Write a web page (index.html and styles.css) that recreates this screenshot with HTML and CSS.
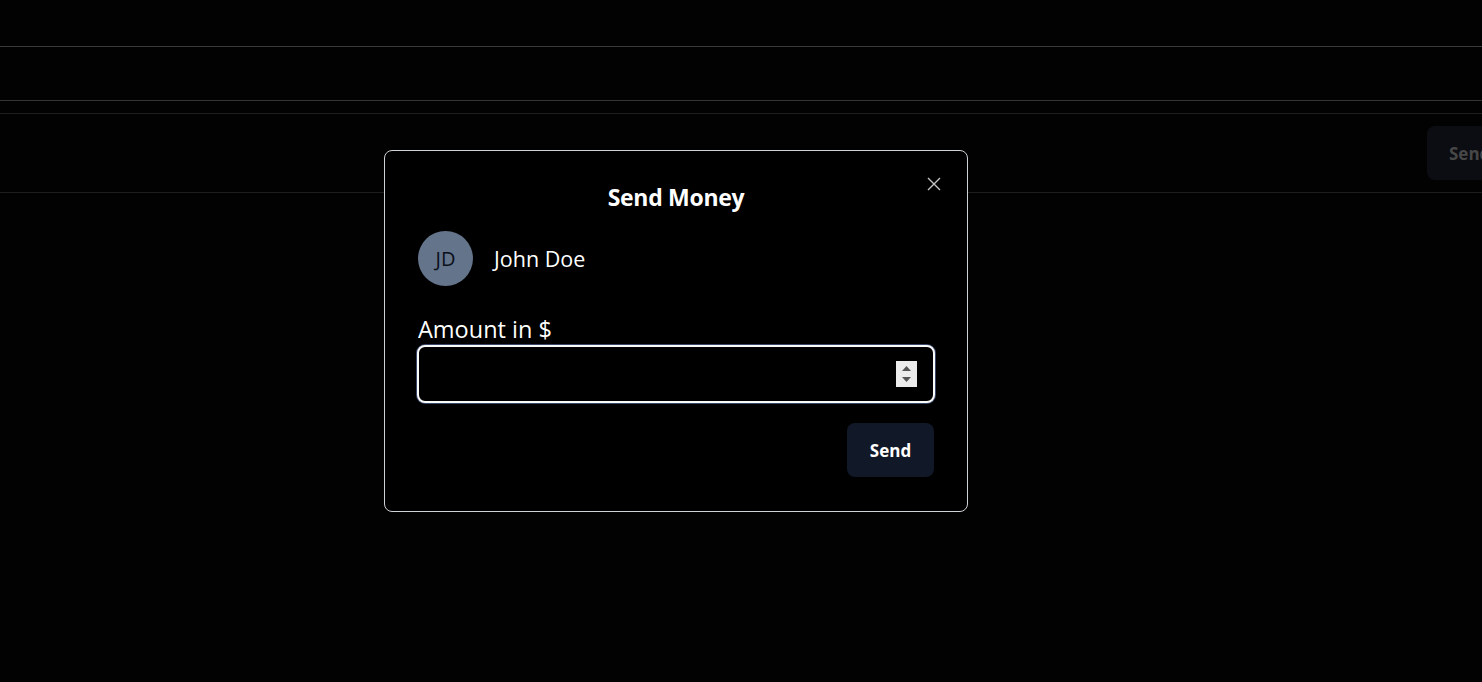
FILE: index.html
```html
<!DOCTYPE html>
<html lang="en">
<head>
<meta charset="utf-8">
<title>Send Money</title>
<link rel="stylesheet" href="styles.css">
</head>
<body>
<div class="page">
  <header class="topbar"></header>
  <div class="greeting"></div>
  <div class="users">
    <div class="user-row">
      <button class="row-send">Send</button>
    </div>
  </div>
</div>

<div class="modal">
  <div class="modal-head">
    <h2 class="modal-title">Send Money</h2>
    <button class="close" aria-label="Close">
      <svg viewBox="0 0 14 14" width="14" height="14"><path d="M1 1L13 13M13 1L1 13" stroke="#c4c4c4" stroke-width="1.4" fill="none"/></svg>
    </button>
  </div>
  <div class="recipient">
    <div class="avatar">JD</div>
    <div class="name">John Doe</div>
  </div>
  <label class="label" for="amount">Amount in $</label>
  <div class="field">
    <input id="amount" class="input" type="text">
    <span class="spinner">
      <svg viewBox="0 0 21 26" width="21" height="26"><path d="M6 10L10.5 5L15 10Z" fill="#555"/><path d="M6 16L10.5 21L15 16Z" fill="#555"/></svg>
    </span>
  </div>
  <div class="actions">
    <button class="send">Send</button>
  </div>
</div>
</body>
</html>
```
FILE: styles.css
```css
html, body {
  margin: 0;
  padding: 0;
  background: #020202;
  overflow: hidden;
  height: 100%;
}
body {
  font-family: "Open Sans", "Noto Sans", sans-serif;
  color: #fff;
}
.page {
  display: flex;
  flex-direction: column;
}
.topbar {
  height: 46px;
  border-bottom: 1px solid #3b3b3b;
}
.greeting {
  height: 53px;
  border-bottom: 1px solid #353535;
}
.users {
  padding-top: 12px;
}
.user-row {
  display: flex;
  justify-content: flex-end;
  border-top: 1px solid #1e1e1e;
  border-bottom: 1px solid #1e1e1e;
  padding: 12px 0;
}
.row-send {
  width: 87px;
  height: 54px;
  margin-right: -32px;
  border: none;
  border-radius: 8px;
  background: #0b0d13;
  color: #474747;
  font-family: inherit;
  font-weight: 700;
  font-size: 17px;
  text-align: left;
  padding: 0 0 0 22px;
}
.modal {
  position: absolute;
  left: 384px;
  top: 150px;
  width: 518px;
  padding: 30px 32px 34px;
  border: 1px solid #cfd2d6;
  border-radius: 8px;
  background: #000;
  display: flex;
  flex-direction: column;
}
.modal-head {
  position: relative;
  display: flex;
  justify-content: center;
}
.modal-title {
  margin: 0;
  font-size: 23px;
  line-height: 32px;
  font-weight: 700;
  letter-spacing: -0.3px;
}
.close {
  position: absolute;
  right: -6px;
  top: -4px;
  width: 14px;
  height: 14px;
  padding: 0;
  border: none;
  background: none;
  display: flex;
}
.recipient {
  display: flex;
  align-items: center;
  gap: 21px;
  margin-top: 18px;
  padding-left: 1px;
}
.avatar {
  width: 55px;
  height: 55px;
  border-radius: 50%;
  background: #64748b;
  color: #0b0f1a;
  display: flex;
  align-items: center;
  justify-content: center;
  font-size: 20px;
}
.name {
  font-size: 21.5px;
}
.label {
  margin-top: 28px;
  padding-left: 1px;
  font-size: 23.5px;
  line-height: 31px;
}
.field {
  position: relative;
}
.input {
  box-sizing: border-box;
  width: 100%;
  height: 58px;
  border: 2px solid #fafafa;
  border-radius: 8px;
  background: #000;
  outline: none;
  box-shadow: 0 0 0 1px #3a4868;
  color: #fff;
  font-size: 18px;
  padding: 0 16px;
}
.spinner {
  position: absolute;
  right: 18px;
  top: 16px;
  width: 21px;
  height: 26px;
  background: #ececec;
  display: flex;
}
.actions {
  display: flex;
  justify-content: flex-end;
  margin-top: 20px;
}
.send {
  width: 87px;
  height: 54px;
  margin-right: 1px;
  border: none;
  border-radius: 8px;
  background: #111827;
  color: #fff;
  font-family: inherit;
  font-weight: 700;
  font-size: 17px;
}
```
